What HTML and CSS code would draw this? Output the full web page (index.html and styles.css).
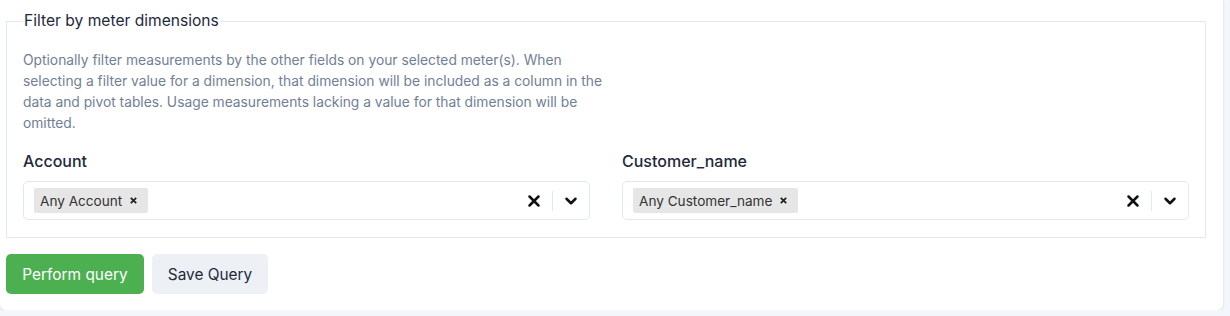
FILE: index.html
```html
<!DOCTYPE html>
<html lang="en">
<head>
    <meta charset="UTF-8">
    <title>Filter by meter dimensions</title>
    <link rel="stylesheet" href="styles.css">
</head>
<body>
    <div class="card">
        <fieldset class="filters">
            <legend>Filter by meter dimensions</legend>
            <p class="help">
                Optionally filter measurements by the other fields on your selected meter(s). When
                selecting a filter value for a dimension, that dimension will be included as a column in the
                data and pivot tables. Usage measurements lacking a value for that dimension will be
                omitted.
            </p>

            <div class="fields">
                <div class="field">
                    <label class="field-label">Account</label>
                    <div class="select">
                        <div class="select-values">
                            <span class="tag">Any Account
                                <svg class="tag-remove" viewBox="0 0 10 10"><path d="M2 2 L8 8 M8 2 L2 8"></path></svg>
                            </span>
                        </div>
                        <div class="select-actions">
                            <svg class="icon-clear" viewBox="0 0 20 20"><path d="M5 5 L15 15 M15 5 L5 15"></path></svg>
                            <span class="divider"></span>
                            <svg class="icon-chevron" viewBox="0 0 20 20"><path d="M5 7.5 L10 12.5 L15 7.5"></path></svg>
                        </div>
                    </div>
                </div>
                <div class="field">
                    <label class="field-label">Customer_name</label>
                    <div class="select">
                        <div class="select-values">
                            <span class="tag">Any Customer_name
                                <svg class="tag-remove" viewBox="0 0 10 10"><path d="M2 2 L8 8 M8 2 L2 8"></path></svg>
                            </span>
                        </div>
                        <div class="select-actions">
                            <svg class="icon-clear" viewBox="0 0 20 20"><path d="M5 5 L15 15 M15 5 L5 15"></path></svg>
                            <span class="divider"></span>
                            <svg class="icon-chevron" viewBox="0 0 20 20"><path d="M5 7.5 L10 12.5 L15 7.5"></path></svg>
                        </div>
                    </div>
                </div>
            </div>
        </fieldset>

        <div class="actions">
            <button class="btn btn-primary">Perform query</button>
            <button class="btn btn-light">Save Query</button>
        </div>
    </div>
</body>
</html>
```

FILE: styles.css
```css
* {
    margin: 0;
    padding: 0;
    box-sizing: border-box;
}

body {
    font-family: 'Inter', 'Liberation Sans', sans-serif;
    background: #f3f6fa;
    color: #1e293b;
}

.card {
    width: 1223px;
    background: #ffffff;
    border-radius: 0 0 6px 6px;
    box-shadow: 0 1px 3px rgba(15, 23, 42, 0.12);
    padding: 12px 6px 16px 6px;
}

.filters {
    border: 1px solid #e2e8f0;
    padding: 0 16px 17px 16px;
    width: 1200px;
}

.filters legend {
    font-size: 15.6px;
    font-weight: 400;
    color: #1e293b;
    padding: 0 1px;
    line-height: 18px;
}

.help {
    font-size: 13.8px;
    line-height: 21px;
    color: #718096;
    max-width: 600px;
    margin-top: 20px;
}

.fields {
    display: grid;
    grid-template-columns: 1fr 1fr;
    gap: 32px;
    margin-top: 17px;
}

.field-label {
    display: block;
    font-size: 16px;
    font-weight: 500;
    color: #1e293b;
    line-height: 20px;
    margin-bottom: 10px;
}

.select {
    display: flex;
    align-items: center;
    height: 39px;
    border: 1px solid #e2e8f0;
    border-radius: 5px;
    padding: 0 0 0 10px;
}

.select-values {
    flex: 1;
    display: flex;
}

.tag {
    display: inline-flex;
    align-items: center;
    height: 25px;
    background: #e6e6e6;
    border-radius: 2px;
    padding: 0 10px 0 6px;
    font-size: 13.6px;
    color: #333333;
}

.tag-remove {
    width: 9px;
    height: 9px;
    margin-left: 7px;
    fill: none;
    stroke: #222222;
    stroke-width: 2;
}

.select-actions {
    display: flex;
    align-items: center;
}

.select-actions svg {
    width: 18px;
    height: 18px;
    fill: none;
    stroke: #111111;
    stroke-width: 2.8;
    stroke-linecap: round;
    stroke-linejoin: round;
}

.icon-clear {
    margin: 0 9px;
}

.icon-chevron {
    margin: 0 9px;
    stroke-width: 2.6;
}

.divider {
    width: 1px;
    height: 20px;
    background: #e2e8f0;
}

.actions {
    display: flex;
    gap: 8px;
    margin-top: 16px;
}

.btn {
    height: 40px;
    border: none;
    border-radius: 5px;
    font-family: inherit;
    font-size: 15.4px;
    padding: 0 10px;
}

.btn-primary {
    background: #4caf50;
    color: #ffffff;
    width: 138px;
}

.btn-light {
    background: #edf1f6;
    color: #1e293b;
    width: 116px;
}
```
